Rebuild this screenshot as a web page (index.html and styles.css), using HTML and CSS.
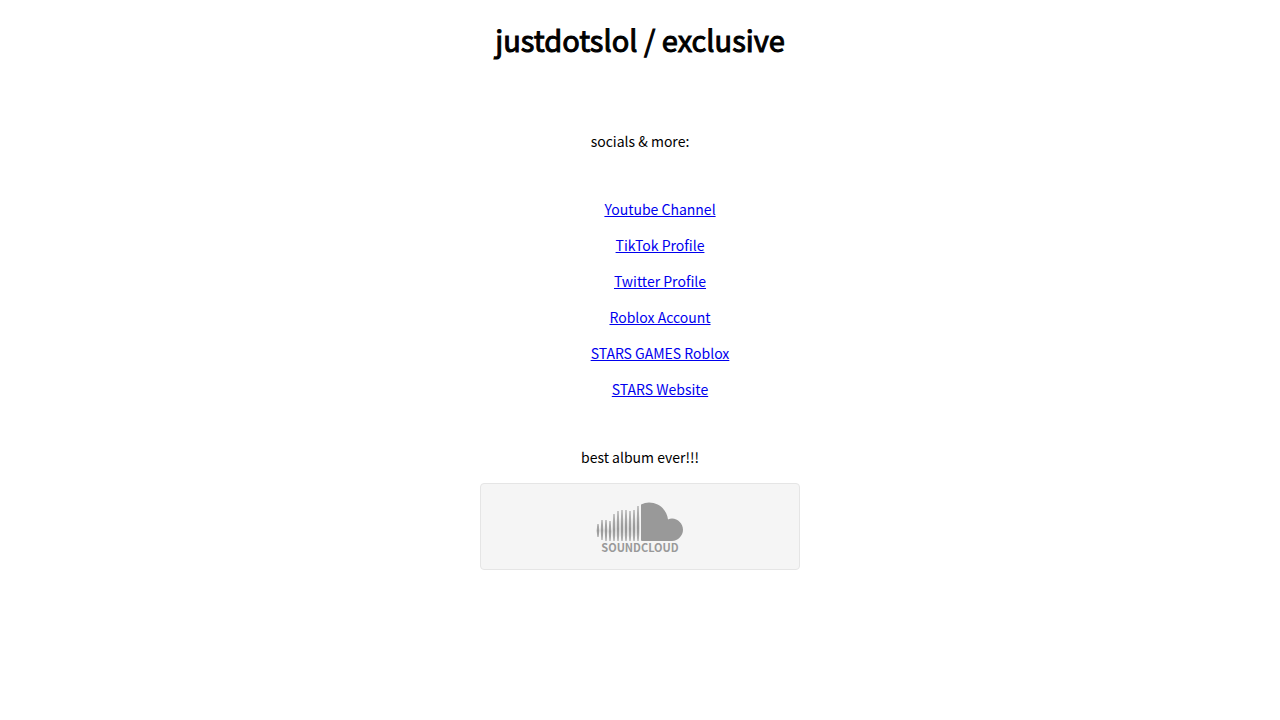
FILE: index.html
```html
<!DOCTYPE html>
<html lang="en">
<head>
    <meta charset="UTF-8">
    <meta name="viewport" content="width=device-width, initial-scale=1.0">
    <title>justdotslol / exclusive</title>
    <link rel="stylesheet" href="styles.css">
</head>
<body>
    <h1>justdotslol / exclusive</h1>

    <p>socials &amp; more:</p>

    <ul class="links">
        <li><a href="#">Youtube Channel</a></li>
        <li><a href="#">TikTok Profile</a></li>
        <li><a href="#">Twitter Profile</a></li>
        <li><a href="#">Roblox Account</a></li>
        <li><a href="#">STARS GAMES Roblox</a></li>
        <li><a href="#">STARS Website</a></li>
    </ul>

    <p>best album ever!!!</p>

    <div class="player">
        <svg class="cloud" viewBox="0 0 86 38" aria-hidden="true">
            <path d="M44 1.500Q48 -.4 52 -.4C62 -.4 70 7 71 16.500Q73 15.600 75 15.600C81 15.600 86 21 86 26.800S81 38 75 38H45Q44 38 44 37Z"/>
            <!-- waveform bars, pointed at both ends -->
            <path d="M1 21Q3 28 1 34Q-1 28 1 21Z
                M5 17Q7 28 5 37Q3 28 5 17Z
                M9 17Q11 28 9 38Q7 28 9 17Z
                M13 18Q15 29 13 38Q11 29 13 18Z
                M17 11Q19 29 17 38Q15 29 17 11Z
                M21 8Q23 29 21 38Q19 29 21 8Z
                M25 7Q27 29 25 38Q23 29 25 7Z
                M29 7Q31 29 29 38Q27 29 29 7Z
                M33 8Q35 29 33 38Q31 29 33 8Z
                M37 7Q39 29 37 38Q35 29 37 7Z
                M41 3Q43 29 41 38Q39 29 41 3Z" stroke="#999" stroke-width=".6"/>
        </svg>
        <span class="brand">SOUNDCLOUD</span>
    </div>
</body>
</html>
```

FILE: styles.css
```css
body {
    margin: 0 8px;
    background-color: #fff;
    color: #000;
    font-family: "Noto Sans CJK SC", sans-serif;
    font-size: 14px;
    line-height: 20px;
    text-align: center;
}

h1 {
    margin: 17px 0 70px;
    font-size: 29px;
    font-weight: normal;
    line-height: 44px;
    -webkit-text-stroke: 1px #000;
}

p {
    margin: 0;
}

.links {
    margin: 48px 0;
    padding: 0 0 0 40px;
    list-style: none;
}

.links li + li {
    margin-top: 16px;
}

.links a {
    color: #0000ee;
}

.player {
    box-sizing: border-box;
    display: flex;
    flex-direction: column;
    align-items: center;
    max-width: 320px;
    margin: 16px auto 0;
    padding: 19px 0 16px;
    border: 1px solid #e5e5e5;
    border-radius: 4px;
    background-color: #f5f5f5;
    color: #999;
}

.cloud {
    width: 86px;
    height: 38px;
    overflow: visible;
    fill: #999;
}

.brand {
    font: bold 11px/12px "Noto Sans CJK SC", sans-serif;
}
```
